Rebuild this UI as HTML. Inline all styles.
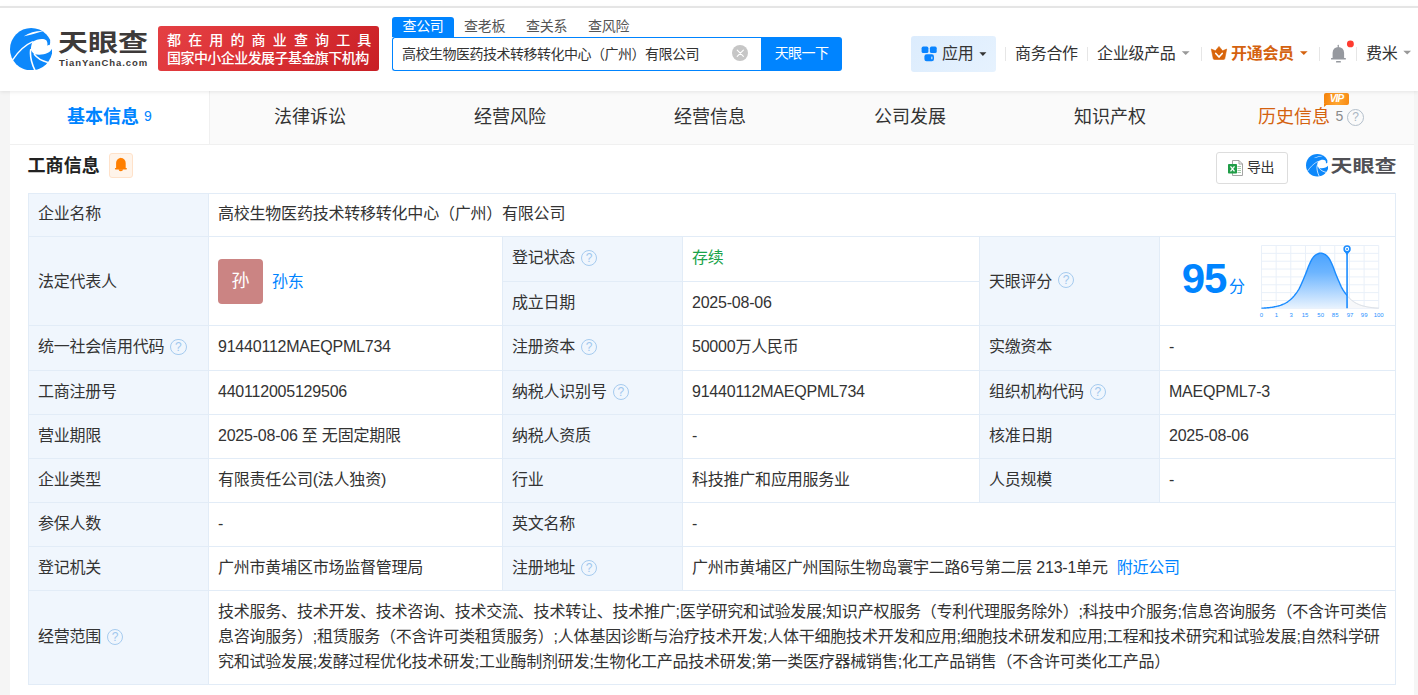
<!DOCTYPE html>
<html lang="zh-CN">
<head>
<meta charset="utf-8">
<title>天眼查</title>
<style>
*{box-sizing:border-box;margin:0;padding:0}
html,body{width:1418px;height:695px;overflow:hidden;background:#f5f5f5}
body{font-family:"Liberation Sans","Noto Sans CJK SC",sans-serif;color:#333;font-size:16px;position:relative}
.abs{position:absolute}
a{text-decoration:none;color:#0084ff}
/* header */
#topstrip{left:0;top:0;width:1418px;height:6px;background:#fff}
#topline{left:0;top:6px;width:1418px;height:2px;background:#e5e5e5;z-index:6}
#header{left:0;top:7px;width:1418px;height:84px;background:#fff;box-shadow:0 1px 4px rgba(0,0,0,.09);z-index:5}
#logo-text{left:58px;top:25.5px;font-size:30px;font-weight:700;color:#3d3a39;letter-spacing:0;line-height:34px;white-space:nowrap;transform:scaleY(.78);transform-origin:50% 50%}
#logo-sub{left:59px;top:57px;font-size:9.5px;font-weight:700;color:#3d3a39;letter-spacing:.9px;line-height:12px;white-space:nowrap}
#banner{left:158px;top:26px;width:221px;height:45px;border-radius:3px;background:linear-gradient(135deg,#e44044,#dc3236 45%,#c81f25);color:#fff;white-space:nowrap}
#banner .l1{left:9px;top:5px;font-size:14px;font-weight:500;letter-spacing:7.15px;line-height:18px}
#banner .l2{left:9px;top:23px;font-size:14px;font-weight:500;letter-spacing:-.56px;line-height:18px}
/* search */
.stab{top:17px;height:20px;font-size:14px;line-height:19px;color:#555;white-space:nowrap;letter-spacing:-.3px}
#stab1{left:392px;width:62px;background:#0084ff;color:#fff;text-align:center;border-radius:3px 3px 0 0}
#sinput{left:392px;top:37px;width:370px;height:34px;border:1px solid #0084ff;border-right:none;border-radius:3px 0 0 3px;background:#fff}
#sinput span{left:9px;top:7px;font-size:14px;line-height:18px;color:#333;white-space:nowrap;letter-spacing:-.5px}
#sclear{left:731.500px;top:44.700px;width:16.600px;height:16.600px;border-radius:50%;background:#c6c6c6}
#sbtn{left:761px;top:37px;width:81px;height:34px;background:#0084ff;color:#fff;font-size:14px;line-height:32px;text-align:center;border-radius:0 3px 3px 0;letter-spacing:-.6px}
/* nav */
.nav{top:44px;font-size:16px;line-height:20px;color:#333;white-space:nowrap;letter-spacing:-.3px}
#appbtn{left:911px;top:36px;width:85px;height:36px;background:linear-gradient(135deg,#dcecfd,#e6f2fe);border-radius:3px}
.vsep{top:45px;width:1px;height:16px;background:#e5e5e5}
.caret{width:0;height:0;border-left:4px solid transparent;border-right:4px solid transparent;border-top:4px solid #999}
/* tabs */
#main{left:10px;top:91px;width:1404px;height:604px;background:#fff}
#tabs{left:10px;top:91px;width:1404px;height:54px;background:#fafafa;border-bottom:1px solid #f0f0f0}
#tab1{left:10px;top:91px;width:200px;height:54px;background:#fff;border-right:1px solid #f0f0f0;border-bottom:1px solid #f0f0f0}
.tab{top:105px;width:200px;text-align:center;font-size:18px;line-height:24px;color:#333;white-space:nowrap;letter-spacing:0}
#vip{left:1324px;top:93px;width:25px;height:12px;border-radius:2px;background:linear-gradient(100deg,#f5820a,#ffa632 55%,#f88a12);color:#fff;font-size:10px;font-weight:700;line-height:12px;text-align:center;letter-spacing:-.8px;font-family:"Liberation Sans",sans-serif}
.q2{left:1347px;top:109px;width:17px;height:17px;border:1.5px solid #b3bfcb;border-radius:50%;color:#aab6c2;font-size:12px;line-height:14px;text-align:center;font-family:"Liberation Sans",sans-serif}
/* section */
#sect{left:27.5px;top:153.5px;font-size:18px;font-weight:700;line-height:24px;color:#222;letter-spacing:.1px;white-space:nowrap}
#bellbox{left:109px;top:153px;width:24px;height:25px;border:1px solid #ffe2ca;background:#fff4ea;border-radius:3px}
#export{left:1216px;top:152px;width:72px;height:32px;border:1px solid #ddd;border-radius:3px;background:#fff}
#wm{left:1330.500px;top:153.200px;font-size:22px;font-weight:700;line-height:26px;color:#505055;white-space:nowrap;transform:scaleY(.8);transform-origin:50% 50%}
/* table */
.c{position:absolute;border:1px solid #e2ecf7;border-left:none;border-top:none;font-size:16px;line-height:22px;white-space:nowrap;letter-spacing:-.22px;padding-left:9px;padding-bottom:2px;display:flex;align-items:center;color:#333}
.ava{display:inline-block;width:45px;height:45px;border-radius:4px;background:#cb8483;color:#fff;font-size:18px;line-height:45px;text-align:center;letter-spacing:0;margin-right:9px;padding:0}
.nm{color:#0084ff}
.scope{white-space:nowrap;line-height:25px;font-size:16px}
.scope div{height:25px}
.c[style*="height:89px"] .q{top:-1.400px}
.k{background:#f0f6fd}
.v{background:#fff}
.q{display:block;flex:none;width:16.400px;height:16.400px;border:1.800px solid #a6cbef;border-radius:50%;margin-left:5.900px;color:#a0c7ee;font-size:12px;line-height:15.800px;text-align:center;letter-spacing:0;font-family:"Liberation Sans",sans-serif;position:relative;top:.3px}
</style>
</head>
<body>
<div class="abs" id="topstrip"></div>
<div class="abs" id="topline"></div>
<div class="abs" id="header"></div>
<div class="abs" id="main"></div>
<div class="abs" id="tabs"></div>
<div class="abs" id="tab1"></div>
<div id="hdr" style="position:absolute;left:0;top:0;z-index:10">
<svg class="abs" style="left:9.8px;top:27.7px" width="42.4" height="42.4" viewBox="70 92 508 508">
<circle cx="324" cy="346" r="254" fill="#0d88fb"/>
<path fill="#fff" d="M340,258 C390,222 470,212 505,238 C522,262 520,290 516,302 C530,304 545,298 549,288 C552,270 552,255 550,240 L600,240 L600,335 L578,328 C560,390 480,425 362,408 C340,385 325,365 320,350 C322,310 330,280 340,258 Z"/>
<path fill="none" stroke="#fff" stroke-width="16" d="M344,256 C250,296 160,385 100,478"/>
<path fill="none" stroke="#fff" stroke-width="19" d="M319,346 C306,430 330,520 370,600"/>
<path fill="none" stroke="#fff" stroke-width="17" d="M358,404 C400,460 460,490 524,505"/>
<path fill="#fff" d="M236,192 C300,146 390,124 470,128 C390,152 310,176 236,192 Z"/>
</svg>
<div class="abs" id="logo-text">天眼查</div>
<div class="abs" id="logo-sub">TianYanCha.com</div>
<div class="abs" id="banner"><div class="abs l1">都在用的商业查询工具</div><div class="abs l2">国家中小企业发展子基金旗下机构</div></div>
<div class="abs stab" id="stab1">查公司</div>
<div class="abs stab" style="left:464px">查老板</div>
<div class="abs stab" style="left:526px">查关系</div>
<div class="abs stab" style="left:588px">查风险</div>
<div class="abs" id="sinput"><span class="abs">高校生物医药技术转移转化中心（广州）有限公司</span></div>
<div class="abs" id="sclear"></div>
<svg class="abs" style="left:731.500px;top:44.700px" width="16.600" height="16.600" viewBox="0 0 16.600 16.600"><path d="M5.200,5.200 L11.400,11.400 M11.400,5.200 L5.200,11.400" stroke="#fff" stroke-width="1.100" stroke-linecap="round"/></svg>
<div class="abs" id="sbtn">天眼一下</div>
<div class="abs" id="appbtn"></div>
<svg class="abs" style="left:0;top:0;overflow:visible" width="1418" height="91" viewBox="0 0 1418 91">
<g fill="#0a84ff">
<rect x="921.6" y="46.6" width="6.8" height="6.4" rx="1.6"/>
<rect x="929.9" y="46.6" width="6.8" height="6.4" rx="1.6"/>
<rect x="924.4" y="54.3" width="9.6" height="6.9" rx="2.2"/>
</g>
<rect x="931.3" y="56.6" width="1.1" height="2.6" rx=".5" fill="#dfeefd"/>
<path d="M979.4,52.2 h7 l-3.5,3.8 z" fill="#333"/>
<path d="M1181.8,51.2 h7.8 l-3.9,3.8 z" fill="#999"/>
<path d="M1300,51.2 h7.6 l-3.8,3.9 z" fill="#d4620f"/>
<path d="M1403.3,50.7 h7.8 l-3.9,3.7 z" fill="#999"/>
<g fill="#e6e6e6">
<rect x="1005" y="47" width="1" height="14"/>
<rect x="1087" y="47" width="1" height="14"/>
<rect x="1201" y="47" width="1" height="14"/>
<rect x="1319" y="47" width="1" height="14"/>
<rect x="1356" y="47" width="1" height="14"/>
</g>
<path fill="#d8640a" stroke="#d8640a" stroke-width=".6" stroke-linejoin="round" d="M1211.300,49 L1215.400,50.800 L1219,46.400 L1222.600,50.800 L1226.700,49 L1224.800,58.500 Q1224.600,59.500 1223.500,59.500 L1214.500,59.500 Q1213.400,59.500 1213.200,58.500 Z"/>
<path fill="none" stroke="#fff" stroke-width="1.7" stroke-linecap="round" stroke-linejoin="round" d="M1215.800,53.500 L1219,57 L1222.200,53.500"/>
<g fill="#96999f">
<rect x="1337.700" y="44.800" width="1.200" height="3" rx=".5"/>
<path d="M1332.600,58.300 V52.700 a5.750,5.800 0 0 1 11.500,0 V58.300 Z"/>
<rect x="1331" y="58" width="14.900" height="1.600" rx=".5"/>
<rect x="1336" y="61.100" width="4.900" height="1.500" rx=".6"/>
</g>
<circle cx="1350.400" cy="43.900" r="3.450" fill="#ff3b30"/>
</svg>
<div class="abs nav" style="left:942px">应用</div>
<div class="abs nav" style="left:1015px">商务合作</div>
<div class="abs nav" style="left:1097px">企业级产品</div>
<div class="abs nav" style="left:1231px;color:#d4620f;font-weight:700">开通会员</div>
<div class="abs nav" style="left:1366px">费米</div>
</div>
<div class="abs tab" style="left:67px;top:105px;width:auto;text-align:left;color:#0084ff;font-weight:700;letter-spacing:0">基本信息</div>
<div class="abs" style="left:144px;top:108px;font-size:14px;line-height:16px;color:#0084ff">9</div>
<div class="abs tab" style="left:210px">法律诉讼</div>
<div class="abs tab" style="left:410px">经营风险</div>
<div class="abs tab" style="left:610px">经营信息</div>
<div class="abs tab" style="left:810px">公司发展</div>
<div class="abs tab" style="left:1010px">知识产权</div>
<div class="abs tab" style="left:1258px;width:auto;text-align:left;color:#d4620f">历史信息</div>
<div class="abs" style="left:1335.5px;top:108px;font-size:14px;line-height:16px;color:#8a8a8a">5</div>
<div class="abs q2">?</div>
<div class="abs" id="vip"><i>VIP</i></div>
<svg class="abs" style="left:1324px;top:104px" width="4" height="3" viewBox="0 0 4 3"><path d="M0,0 H3.500 L0,3 Z" fill="#f5820a"/></svg>
<div class="abs" id="sect">工商信息</div>
<div class="abs" id="bellbox"></div>
<svg class="abs" style="left:109px;top:153px" width="24" height="25" viewBox="109 153 24 25"><g fill="#ff7f00"><path d="M116.100,168.600 V163 a4.800,4.900 0 0 1 9.600,0 V168.600 Z"/><rect x="120.200" y="157.700" width="1.200" height="1.500" rx=".5"/><rect x="114.900" y="168" width="12" height="1.400" rx=".6"/><path d="M118.600,169.200 h4.400 a2.200,2 0 0 1 -4.400,0 z"/></g></svg>
<div class="abs" id="export"></div>
<svg class="abs" style="left:1228px;top:160px" width="15" height="16" viewBox="0 0 15 16">
<path d="M4.500,.5 H11 L14.500,4 V15.500 H4.500 Z" fill="#fff" stroke="#9a9a9a" stroke-width=".9"/>
<path d="M11,.5 V4 H14.500" fill="none" stroke="#9a9a9a" stroke-width=".9"/>
<g stroke="#9ac29f" stroke-width=".9"><path d="M9.500,6.500H13M9.500,8.500H13M9.500,10.500H13M9.500,12.500H13"/></g>
<rect x="0" y="4" width="9" height="9.500" rx=".8" fill="#1f9d47"/>
<path d="M2.500,6.300 L6.500,11.300 M6.500,6.300 L2.500,11.300" stroke="#fff" stroke-width="1.300"/>
</svg>
<div class="abs" style="left:1247px;top:158px;font-size:14px;line-height:18px;color:#333;letter-spacing:-.4px;white-space:nowrap">导出</div>
<svg class="abs" style="left:1305.500px;top:154px" width="22.600" height="22.600" viewBox="70 92 508 508">
<circle cx="324" cy="346" r="254" fill="#0d88fb"/>
<path fill="#fff" d="M340,258 C390,222 470,212 505,238 C522,262 520,290 516,302 C530,304 545,298 549,288 C552,270 552,255 550,240 L600,240 L600,335 L578,328 C560,390 480,425 362,408 C340,385 325,365 320,350 C322,310 330,280 340,258 Z"/>
<path fill="none" stroke="#fff" stroke-width="14" d="M342,256 C250,300 160,390 103,480"/>
<path fill="none" stroke="#fff" stroke-width="17" d="M319,348 C306,430 330,520 370,597"/>
<path fill="none" stroke="#fff" stroke-width="17" d="M360,406 C400,460 460,490 522,504"/>
<path fill="#fff" d="M240,190 C300,150 390,128 468,130 C390,150 310,172 240,190 Z"/>
</svg>
<div class="abs" id="wm">天眼查</div>
<div id="tbl">
<div class="abs" style="left:28px;top:193px;width:1368px;height:1px;background:#e2ecf7"></div>
<div class="abs" style="left:28px;top:193px;width:1px;height:492px;background:#e2ecf7"></div>
<div class="c k" style="left:29px;top:194px;width:180px;height:43px;">企业名称</div>
<div class="c v" style="left:209px;top:194px;width:1187px;height:43px;">高校生物医药技术转移转化中心（广州）有限公司</div>
<div class="c k" style="left:29px;top:237px;width:180px;height:89px;padding-bottom:0;padding-top:1px">法定代表人</div>
<div class="c v" style="left:209px;top:237px;width:294px;height:89px;padding-bottom:0;padding-top:1px"><span class="ava">孙</span><a class="nm">孙东</a></div>
<div class="c k" style="left:503px;top:237px;width:180px;height:45px;">登记状态<span class="q">?</span></div>
<div class="c v" style="left:683px;top:237px;width:297px;height:45px;"><span style="color:#1aa34a">存续</span></div>
<div class="c k" style="left:503px;top:282px;width:180px;height:44px;">成立日期</div>
<div class="c v" style="left:683px;top:282px;width:297px;height:44px;">2025-08-06</div>
<div class="c k" style="left:980px;top:237px;width:180px;height:89px;padding-bottom:0;padding-top:1px">天眼评分<span class="q">?</span></div>
<div class="c v" style="left:1160px;top:237px;width:236px;height:89px;padding-bottom:0;padding-top:1px"><!--SCORE--></div>
<div class="c k" style="left:29px;top:326px;width:180px;height:45px;">统一社会信用代码<span class="q">?</span></div>
<div class="c v" style="left:209px;top:326px;width:294px;height:45px;">91440112MAEQPML734</div>
<div class="c k" style="left:503px;top:326px;width:180px;height:45px;">注册资本<span class="q">?</span></div>
<div class="c v" style="left:683px;top:326px;width:297px;height:45px;">50000万人民币</div>
<div class="c k" style="left:980px;top:326px;width:180px;height:45px;">实缴资本</div>
<div class="c v" style="left:1160px;top:326px;width:236px;height:45px;">-</div>
<div class="c k" style="left:29px;top:371px;width:180px;height:44px;">工商注册号</div>
<div class="c v" style="left:209px;top:371px;width:294px;height:44px;">440112005129506</div>
<div class="c k" style="left:503px;top:371px;width:180px;height:44px;">纳税人识别号<span class="q">?</span></div>
<div class="c v" style="left:683px;top:371px;width:297px;height:44px;">91440112MAEQPML734</div>
<div class="c k" style="left:980px;top:371px;width:180px;height:44px;">组织机构代码<span class="q">?</span></div>
<div class="c v" style="left:1160px;top:371px;width:236px;height:44px;">MAEQPML7-3</div>
<div class="c k" style="left:29px;top:415px;width:180px;height:44px;">营业期限</div>
<div class="c v" style="left:209px;top:415px;width:294px;height:44px;">2025-08-06 至 无固定期限</div>
<div class="c k" style="left:503px;top:415px;width:180px;height:44px;">纳税人资质</div>
<div class="c v" style="left:683px;top:415px;width:297px;height:44px;">-</div>
<div class="c k" style="left:980px;top:415px;width:180px;height:44px;">核准日期</div>
<div class="c v" style="left:1160px;top:415px;width:236px;height:44px;">2025-08-06</div>
<div class="c k" style="left:29px;top:459px;width:180px;height:44px;">企业类型</div>
<div class="c v" style="left:209px;top:459px;width:294px;height:44px;">有限责任公司(法人独资)</div>
<div class="c k" style="left:503px;top:459px;width:180px;height:44px;">行业</div>
<div class="c v" style="left:683px;top:459px;width:297px;height:44px;">科技推广和应用服务业</div>
<div class="c k" style="left:980px;top:459px;width:180px;height:44px;">人员规模</div>
<div class="c v" style="left:1160px;top:459px;width:236px;height:44px;">-</div>
<div class="c k" style="left:29px;top:503px;width:180px;height:44px;">参保人数</div>
<div class="c v" style="left:209px;top:503px;width:294px;height:44px;">-</div>
<div class="c k" style="left:503px;top:503px;width:180px;height:44px;">英文名称</div>
<div class="c v" style="left:683px;top:503px;width:713px;height:44px;">-</div>
<div class="c k" style="left:29px;top:547px;width:180px;height:44px;">登记机关</div>
<div class="c v" style="left:209px;top:547px;width:294px;height:44px;">广州市黄埔区市场监督管理局</div>
<div class="c k" style="left:503px;top:547px;width:180px;height:44px;">注册地址<span class="q">?</span></div>
<div class="c v" style="left:683px;top:547px;width:713px;height:44px;">广州市黄埔区广州国际生物岛寰宇二路6号第二层 213-1单元<a style="margin-left:9px">附近公司</a></div>
<div class="c k" style="left:29px;top:591px;width:180px;height:94px;">经营范围<span class="q">?</span></div>
<div class="c v" style="left:209px;top:591px;width:1187px;height:94px;"><div class="scope"><div>技术服务、技术开发、技术咨询、技术交流、技术转让、技术推广;医学研究和试验发展;知识产权服务（专利代理服务除外）;科技中介服务;信息咨询服务（不含许可类信</div><div>息咨询服务）;租赁服务（不含许可类租赁服务）;人体基因诊断与治疗技术开发;人体干细胞技术开发和应用;细胞技术研发和应用;工程和技术研究和试验发展;自然科学研</div><div>究和试验发展;发酵过程优化技术研发;工业酶制剂研发;生物化工产品技术研发;第一类医疗器械销售;化工产品销售（不含许可类化工产品）</div></div></div>
</div><!--/tbl-->
<div class="abs" style="left:1181.7px;top:255.3px;font-size:42px;font-weight:700;line-height:48px;color:#0084ff;letter-spacing:-1px;font-family:'Liberation Sans',sans-serif">95</div>
<div class="abs" style="left:1229px;top:276px;font-size:16px;line-height:22px;color:#0084ff">分</div>
<svg class="abs" style="left:1255px;top:240px" width="140" height="82" viewBox="1255 240 140 82">
<defs><linearGradient id="cg" x1="0" y1="0" x2="0" y2="1"><stop offset="0" stop-color="#4aa3ff"/><stop offset=".35" stop-color="#6db5ff"/><stop offset="1" stop-color="#e9f3fe"/></linearGradient></defs>
<g stroke="#e9f0f9" stroke-width="1" fill="none"><path d="M1261.48,245.49V308.35"/><path d="M1276.14,245.49V308.35"/><path d="M1290.80,245.49V308.35"/><path d="M1305.45,245.49V308.35"/><path d="M1320.11,245.49V308.35"/><path d="M1334.76,245.49V308.35"/><path d="M1349.42,245.49V308.35"/><path d="M1364.08,245.49V308.35"/><path d="M1378.73,245.49V308.35"/><path d="M1261.48,245.49H1378.73"/><path d="M1261.48,253.35H1378.73"/><path d="M1261.48,261.21H1378.73"/><path d="M1261.48,269.06H1378.73"/><path d="M1261.48,276.92H1378.73"/><path d="M1261.48,284.78H1378.73"/><path d="M1261.48,292.64H1378.73"/><path d="M1261.48,300.49H1378.73"/><path d="M1261.48,308.35H1378.73"/></g>
<polygon fill="url(#cg)" points="1261.48,308.18 1262.21,308.16 1262.93,308.14 1263.66,308.10 1264.38,308.05 1265.11,308.00 1265.83,307.95 1266.56,307.89 1267.29,307.82 1268.01,307.76 1268.74,307.69 1269.46,307.61 1270.19,307.52 1270.91,307.43 1271.64,307.32 1272.36,307.20 1273.09,307.08 1273.81,306.94 1274.54,306.80 1275.26,306.65 1275.99,306.50 1276.71,306.33 1277.44,306.16 1278.16,305.97 1278.89,305.77 1279.61,305.55 1280.34,305.31 1281.06,305.05 1281.79,304.78 1282.52,304.50 1283.24,304.19 1283.97,303.88 1284.69,303.54 1285.42,303.17 1286.14,302.75 1286.87,302.30 1287.59,301.82 1288.32,301.30 1289.04,300.76 1289.77,300.18 1290.49,299.58 1291.22,298.96 1291.94,298.28 1292.67,297.51 1293.39,296.69 1294.12,295.83 1294.84,294.94 1295.57,294.02 1296.30,293.06 1297.02,292.05 1297.75,290.97 1298.47,289.83 1299.20,288.59 1299.92,287.19 1300.65,285.66 1301.37,284.04 1302.10,282.38 1302.82,280.73 1303.55,279.04 1304.27,277.31 1305.00,275.53 1305.72,273.74 1306.45,271.88 1307.17,269.93 1307.90,267.98 1308.62,266.12 1309.35,264.44 1310.07,262.85 1310.80,261.31 1311.53,259.89 1312.25,258.65 1312.98,257.66 1313.70,256.81 1314.43,256.04 1315.15,255.38 1315.88,254.84 1316.60,254.43 1317.33,254.08 1318.05,253.76 1318.78,253.48 1319.50,253.27 1320.23,253.14 1320.95,253.12 1321.68,253.22 1322.40,253.40 1323.13,253.66 1323.85,253.97 1324.58,254.31 1325.31,254.69 1326.03,255.18 1326.76,255.81 1327.48,256.54 1328.21,257.37 1328.93,258.29 1329.66,259.45 1330.38,260.82 1331.11,262.33 1331.83,263.91 1332.56,265.54 1333.28,267.34 1334.01,269.28 1334.73,271.24 1335.46,273.13 1336.18,274.94 1336.91,276.72 1337.63,278.47 1338.36,280.17 1339.08,281.83 1339.81,283.49 1340.54,285.13 1341.26,286.70 1341.99,288.14 1342.71,289.43 1343.44,290.60 1344.16,291.70 1344.89,292.73 1345.61,293.70 1346.34,294.64 1347.06,295.53 1347.06,308.35 1261.48,308.35"/>
<polygon fill="#f7f8fa" points="1347.06,295.53 1347.79,296.41 1348.51,297.24 1349.24,298.03 1349.96,298.74 1350.69,299.38 1351.41,299.99 1352.14,300.57 1352.86,301.12 1353.59,301.65 1354.32,302.15 1355.04,302.61 1355.77,303.03 1356.49,303.42 1357.22,303.77 1357.94,304.09 1358.67,304.40 1359.39,304.69 1360.12,304.97 1360.84,305.23 1361.57,305.47 1362.29,305.70 1363.02,305.91 1363.74,306.10 1364.47,306.28 1365.19,306.44 1365.92,306.60 1366.64,306.75 1367.37,306.90 1368.10,307.03 1368.82,307.16 1369.55,307.28 1370.27,307.39 1371.00,307.49 1371.72,307.58 1372.45,307.66 1373.17,307.73 1373.90,307.80 1374.62,307.87 1375.35,307.93 1376.07,307.99 1376.80,308.04 1377.52,308.08 1378.25,308.12 1378.73,308.15 1378.73,308.35 1347.06,308.35"/>
<polyline fill="none" stroke="#d5dbe3" stroke-width="1" points="1347.06,295.53 1347.79,296.41 1348.51,297.24 1349.24,298.03 1349.96,298.74 1350.69,299.38 1351.41,299.99 1352.14,300.57 1352.86,301.12 1353.59,301.65 1354.32,302.15 1355.04,302.61 1355.77,303.03 1356.49,303.42 1357.22,303.77 1357.94,304.09 1358.67,304.40 1359.39,304.69 1360.12,304.97 1360.84,305.23 1361.57,305.47 1362.29,305.70 1363.02,305.91 1363.74,306.10 1364.47,306.28 1365.19,306.44 1365.92,306.60 1366.64,306.75 1367.37,306.90 1368.10,307.03 1368.82,307.16 1369.55,307.28 1370.27,307.39 1371.00,307.49 1371.72,307.58 1372.45,307.66 1373.17,307.73 1373.90,307.80 1374.62,307.87 1375.35,307.93 1376.07,307.99 1376.80,308.04 1377.52,308.08 1378.25,308.12 1378.73,308.15"/>
<polyline fill="none" stroke="#1b8cff" stroke-width="1.400" stroke-linejoin="round" points="1261.48,308.18 1262.21,308.16 1262.93,308.14 1263.66,308.10 1264.38,308.05 1265.11,308.00 1265.83,307.95 1266.56,307.89 1267.29,307.82 1268.01,307.76 1268.74,307.69 1269.46,307.61 1270.19,307.52 1270.91,307.43 1271.64,307.32 1272.36,307.20 1273.09,307.08 1273.81,306.94 1274.54,306.80 1275.26,306.65 1275.99,306.50 1276.71,306.33 1277.44,306.16 1278.16,305.97 1278.89,305.77 1279.61,305.55 1280.34,305.31 1281.06,305.05 1281.79,304.78 1282.52,304.50 1283.24,304.19 1283.97,303.88 1284.69,303.54 1285.42,303.17 1286.14,302.75 1286.87,302.30 1287.59,301.82 1288.32,301.30 1289.04,300.76 1289.77,300.18 1290.49,299.58 1291.22,298.96 1291.94,298.28 1292.67,297.51 1293.39,296.69 1294.12,295.83 1294.84,294.94 1295.57,294.02 1296.30,293.06 1297.02,292.05 1297.75,290.97 1298.47,289.83 1299.20,288.59 1299.92,287.19 1300.65,285.66 1301.37,284.04 1302.10,282.38 1302.82,280.73 1303.55,279.04 1304.27,277.31 1305.00,275.53 1305.72,273.74 1306.45,271.88 1307.17,269.93 1307.90,267.98 1308.62,266.12 1309.35,264.44 1310.07,262.85 1310.80,261.31 1311.53,259.89 1312.25,258.65 1312.98,257.66 1313.70,256.81 1314.43,256.04 1315.15,255.38 1315.88,254.84 1316.60,254.43 1317.33,254.08 1318.05,253.76 1318.78,253.48 1319.50,253.27 1320.23,253.14 1320.95,253.12 1321.68,253.22 1322.40,253.40 1323.13,253.66 1323.85,253.97 1324.58,254.31 1325.31,254.69 1326.03,255.18 1326.76,255.81 1327.48,256.54 1328.21,257.37 1328.93,258.29 1329.66,259.45 1330.38,260.82 1331.11,262.33 1331.83,263.91 1332.56,265.54 1333.28,267.34 1334.01,269.28 1334.73,271.24 1335.46,273.13 1336.18,274.94 1336.91,276.72 1337.63,278.47 1338.36,280.17 1339.08,281.83 1339.81,283.49 1340.54,285.13 1341.26,286.70 1341.99,288.14 1342.71,289.43 1343.44,290.60 1344.16,291.70 1344.89,292.73 1345.61,293.70 1346.34,294.64 1347.06,295.53"/>
<path d="M1347.06,253V308.35" stroke="#1b8cff" stroke-width="1.600"/>
<path d="M1343.76,250.200 L1347.06,255.200 L1350.36,250.200 Z" fill="#1b8cff"/>
<circle cx="1347.06" cy="248.900" r="3.700" fill="#1b8cff"/>
<circle cx="1347.06" cy="248.900" r="2.100" fill="#fff"/>
<circle cx="1347.06" cy="248.900" r="1" fill="#1b8cff"/>
<g font-family="Liberation Sans, sans-serif" font-size="6" fill="#2a93ff"><text x="1261.5" y="316.6" text-anchor="middle">0</text><text x="1276.4" y="316.6" text-anchor="middle">1</text><text x="1291.1" y="316.6" text-anchor="middle">3</text><text x="1305.0" y="316.6" text-anchor="middle">15</text><text x="1320.7" y="316.6" text-anchor="middle">50</text><text x="1335.2" y="316.6" text-anchor="middle">85</text><text x="1350.1" y="316.6" text-anchor="middle">97</text><text x="1364.2" y="316.6" text-anchor="middle">99</text><text x="1378.7" y="316.6" text-anchor="middle">100</text></g>
</svg>
</body>
</html>
